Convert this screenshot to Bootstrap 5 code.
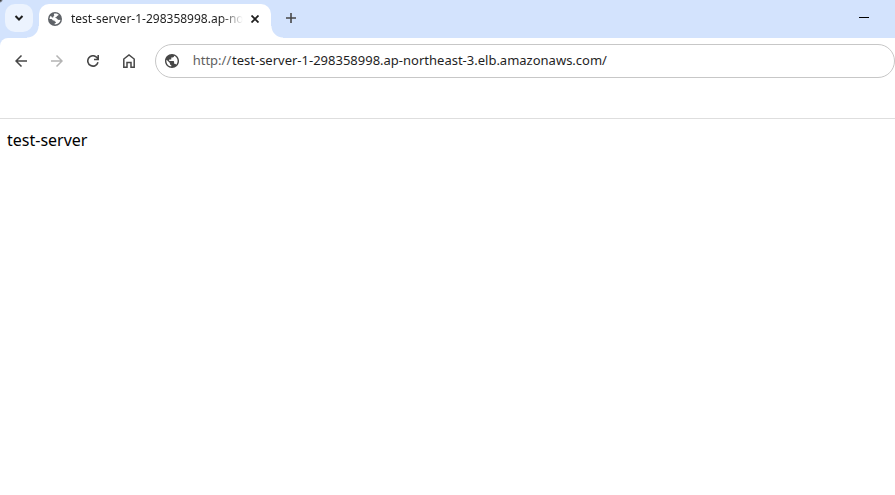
<!DOCTYPE html>
<html lang="en">
<head>
<meta charset="utf-8">
<meta name="viewport" content="width=device-width, initial-scale=1">
<title>test-server</title>
<link href="https://cdn.jsdelivr.net/npm/bootstrap@5.3.0/dist/css/bootstrap.min.css" rel="stylesheet">
<script src="https://cdn.jsdelivr.net/npm/bootstrap@5.3.0/dist/js/bootstrap.bundle.min.js" defer></script>
<style>
body { font-family: "Noto Sans", sans-serif; color: #000; }
header { background: radial-gradient(circle at 0 0, #444 1px, #d3e3fd 3px); }
button svg, .tab-strip svg, .address svg { display: block; flex: none; }
.tab-strip { height: 38px; padding-left: 5px; }
.tool { width: 36px; height: 36px; padding: 0; border: 0; background: none; color: #474747; display: flex; align-items: center; justify-content: center; }
.tool:disabled { color: #b4b4b4; }
.tab-search { width: 28px; height: 28px; margin-top: 4px; border-radius: 10px; background: #ecf3fe; color: #1f1f1f; }
.curve { width: 12px; height: 12px; }
.curve-left { background: radial-gradient(circle at 0 0, transparent 11px, #fff 12px); margin-left: -6px; }
.curve-right { background: radial-gradient(circle at 100% 0, transparent 11px, #fff 12px); }
.page-tab { width: 232px; height: 34px; padding: 0 8px 0 9px; border-radius: 10px 10px 0 0; background: #fff; color: #1f1f1f; }
.tab-title { margin-left: 9px; font-size: 12px; line-height: 20px; -webkit-mask-image: linear-gradient(90deg, #000 150px, transparent 172px); mask-image: linear-gradient(90deg, #000 150px, transparent 172px); }
.tab-close { width: 16px; height: 16px; color: #1f1f1f; }
.new-tab { width: 28px; height: 28px; margin-top: 4px; margin-left: -6px; }
.window-min { width: 44px; height: 34px; margin-right: 9px; color: #000; }
.toolbar-row { height: 46px; padding-left: 3px; background: #fff; border-top-left-radius: 8px; }
.address { height: 34px; margin-left: 8px; padding: 0 12px 0 9px; border: 1px solid #c7c7c7; border-radius: 17px; font-size: 13px; color: #1f1f1f; }
.address label { width: 40px; margin-left: 13px; color: #5f5f5f; text-align: center; }
.address input { padding: 0; border: 0; outline: 0; background: none; color: inherit; font: inherit; min-width: 0; }
.bookmarks { height: 35px; background: #fff; border-bottom: 1px solid #dedede; }
.page-body { padding: 9px 7px; font-size: 16px; line-height: 24px; }
</style>
</head>
<body class="bg-white">
<header>
  <div class="tab-strip d-flex align-items-start">
    <button class="tool tab-search" type="button" aria-label="Search tabs">
      <svg width="10" height="8" viewBox="0 0 10 8" fill="none" stroke="currentColor" stroke-width="2"><path d="M1.500 2L5 5.500 8.500 2"/></svg>
    </button>
    <div class="curve curve-left align-self-end"></div>
    <div class="page-tab d-flex align-items-center align-self-end pb-1">
      <svg width="14" height="14" viewBox="0 0 14 14"><circle cx="7" cy="7" r="7" fill="#5f6368"/><path d="M6.200 1.500C8 1.200 9.600 1.700 10.700 2.600c-.2.900-.8 1.100-1.700 1.300-.2.900-.8 1.300-1.600 1.300-.3.500 0 .8.8.9 1.300.1 1.700.6 1.900 1.300h2.400c-.1 1.400-.7 2.700-1.700 3.600-1.100 1-2.700 1.500-4.200 1.400v-1.200c.9-.1 1.300-.5 1.400-1.300C7.100 9.800 6.500 9.400 6.300 8.500H4.500c0-1-.5-1.500-1.500-1.500H1.500C1.600 5.900 2 4.900 2.500 4.100c.9.300 1.200.8 1.400 1.500h1.300c.2-1.200.5-1.700 1.300-2.100-.7-.4-.8-1.100-.3-2z" fill="#fff"/><path d="M8 6.200c1.700-.3 2.500-.8 3-2.400l1.600 1.500.2 2.500H9.900C9.500 6.900 9 6.500 8 6.200zM1.600 8H4.500v1.400c0 1 .7 1.200 1.700 1.200v2.200C3.700 12.400 1.900 10.500 1.600 8z" fill="#5f6368"/></svg>
      <div class="tab-title text-nowrap">test-server-1-298358998.ap-no</div>
      <button class="tool tab-close ms-auto" type="button" aria-label="Close tab">
        <svg width="8" height="8" viewBox="0 0 8 8" stroke="currentColor" stroke-width="1.800"><path d="M.5.5l7 7m0-7l-7 7"/></svg>
      </button>
    </div>
    <div class="curve curve-right align-self-end"></div>
    <button class="tool new-tab" type="button" aria-label="New tab">
      <svg width="10" height="10" viewBox="0 0 10 10" stroke="currentColor" stroke-width="1.600"><path d="M5 0v10M0 5h10"/></svg>
    </button>
    <button class="tool window-min ms-auto" type="button" aria-label="Minimize">
      <svg width="10" height="1" viewBox="0 0 10 1"><path d="M0 0h10v1H0z"/></svg>
    </button>
  </div>
  <nav class="toolbar-row d-flex align-items-center" aria-label="Browser toolbar">
    <button class="tool" type="button" aria-label="Back">
      <svg width="12" height="12" viewBox="0 0 12 12" fill="none" stroke="currentColor" stroke-width="1.500"><path d="M12 6H1M6.500.5L1 6l5.500 5.500"/></svg>
    </button>
    <button class="tool" type="button" aria-label="Forward" disabled>
      <svg width="12" height="12" viewBox="0 0 12 12" fill="none" stroke="currentColor" stroke-width="1.500"><path d="M0 6h11M5.500.5L11 6l-5.500 5.500"/></svg>
    </button>
    <button class="tool" type="button" aria-label="Reload">
      <svg width="12" height="12" viewBox="0 0 12 12" fill="none" stroke="currentColor" stroke-width="1.600"><path d="M11 7.300A5.200 5.200 0 1 1 9.900 2.500L11 3.800M11.200 0v4.500H7"/></svg>
    </button>
    <button class="tool" type="button" aria-label="Home">
      <svg width="12" height="14" viewBox="0 0 12 14" fill="none" stroke="currentColor" stroke-width="1.500"><path d="M.8 13.200V5L6 1l5.200 4v8.200H8V8.500H4v4.700z"/></svg>
    </button>
    <div class="address d-flex align-items-center flex-grow-1">
      <svg width="14" height="14" viewBox="2 2 20 20" fill="#474747"><path d="M12 2C6.480 2 2 6.480 2 12s4.480 10 10 10 10-4.480 10-10S17.520 2 12 2zm-1 17.930c-3.950-.49-7-3.850-7-7.930 0-.62.08-1.210.21-1.790L9 15v1c0 1.100.9 2 2 2v1.930zm6.900-2.540c-.26-.81-1-1.390-1.900-1.390h-1v-3c0-.55-.45-1-1-1H8v-2h2c.55 0 1-.45 1-1V7h2c1.100 0 2-.9 2-2v-.41c2.930 1.190 5 4.060 5 7.410 0 2.080-.8 3.970-2.100 5.390z"/></svg>
      <label for="url">http://</label>
      <input class="flex-grow-1" id="url" type="text" value="test-server-1-298358998.ap-northeast-3.elb.amazonaws.com/" spellcheck="false">
    </div>
  </nav>
  <div class="bookmarks"></div>
</header>
<main class="page-body">test-server</main>
</body>
</html>
